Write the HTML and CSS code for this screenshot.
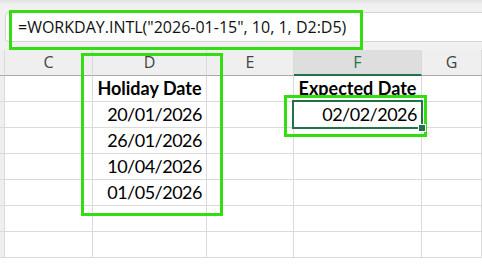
FILE: index.html
```html
<!DOCTYPE html>
<html lang="en">
<head>
    <meta charset="UTF-8">
    <title>WORKDAY.INTL</title>
    <link rel="stylesheet" href="styles.css">
</head>
<body>
    <div class="sheet">
        <div class="toolbar">
            <div class="formula-bar">=WORKDAY.INTL("2026-01-15", 10, 1, D2:D5)</div>
        </div>

        <div class="grid">
            <div class="cell head corner"></div>
            <div class="cell head">C</div>
            <div class="cell head">D</div>
            <div class="cell head">E</div>
            <div class="cell head active">F</div>
            <div class="cell head">G</div>

            <div class="cell corner"></div>
            <div class="cell"></div>
            <div class="cell bold">Holiday Date</div>
            <div class="cell"></div>
            <div class="cell bold">Expected Date</div>
            <div class="cell"></div>

            <div class="cell corner"></div>
            <div class="cell"></div>
            <div class="cell num">20/01/2026</div>
            <div class="cell"></div>
            <div class="cell num selected">02/02/2026<span class="fill-handle"></span></div>
            <div class="cell"></div>

            <div class="cell corner"></div>
            <div class="cell"></div>
            <div class="cell num">26/01/2026</div>
            <div class="cell"></div>
            <div class="cell"></div>
            <div class="cell"></div>

            <div class="cell corner"></div>
            <div class="cell"></div>
            <div class="cell num">10/04/2026</div>
            <div class="cell"></div>
            <div class="cell"></div>
            <div class="cell"></div>

            <div class="cell corner"></div>
            <div class="cell"></div>
            <div class="cell num">01/05/2026</div>
            <div class="cell"></div>
            <div class="cell"></div>
            <div class="cell"></div>

            <div class="cell corner"></div>
            <div class="cell"></div>
            <div class="cell"></div>
            <div class="cell"></div>
            <div class="cell"></div>
            <div class="cell"></div>

            <div class="cell corner"></div>
            <div class="cell"></div>
            <div class="cell"></div>
            <div class="cell"></div>
            <div class="cell"></div>
            <div class="cell"></div>
        </div>

        <!-- highlight boxes drawn over the sheet -->
        <div class="mark mark-formula"></div>
        <div class="mark mark-holidays"></div>
        <div class="mark mark-result"></div>
    </div>
</body>
</html>
```

FILE: styles.css
```css
body {
    margin: 0;
    background-color: #fff;
    font-family: "Open Sans", "Liberation Sans", sans-serif;
}

.sheet {
    position: relative;
    width: 482px;
    height: 272px;
    overflow: hidden;
}

.toolbar {
    height: 50px;
    padding-top: 12px;
    padding-left: 5px;
    box-sizing: border-box;
    background: linear-gradient(#e2e2e2, #f1f1f1 5px, #f1f1f1);
}

.formula-bar {
    height: 30px;
    padding-left: 12px;
    box-sizing: border-box;
    background-color: #fff;
    border: 1px solid #d4d4d4;
    border-right: none;
    border-radius: 4px 0 0 4px;
    font-size: 16px;
    line-height: 28px;
    color: #111;
}

.grid {
    display: grid;
    grid-template-columns: 5px 88px 114px 87px 128px 1fr;
    grid-auto-rows: 26px;
}

.cell {
    border-right: 1px solid #dadada;
    border-bottom: 1px solid #dadada;
    font-family: Lato, "Open Sans", sans-serif;
    font-size: 18px;
    line-height: 25px;
    color: #000;
    white-space: nowrap;
}

.head {
    background-color: #efefef;
    border-bottom-color: #ababab;
    font-family: "Open Sans", sans-serif;
    font-size: 16px;
    color: #444;
    text-align: center;
}

.head.active {
    background-color: #dedede;
    border-bottom: 2px solid #217346;
    line-height: 24px;
    color: #217346;
}

.corner {
    background-color: #efefef;
}

.bold {
    font-weight: bold;
    text-align: center;
}

.num {
    text-align: right;
    padding-right: 4px;
    letter-spacing: -0.5px;
}

.selected {
    position: relative;
}

.selected::after {
    content: "";
    position: absolute;
    left: -2px;
    top: -2px;
    right: -2px;
    bottom: -2px;
    border: 2px solid #217346;
}

.fill-handle {
    position: absolute;
    right: -5px;
    bottom: -5px;
    width: 6px;
    height: 6px;
    background-color: #217346;
    border: 1px solid #fff;
    z-index: 1;
}

.mark {
    position: absolute;
    border: 3px solid #33dd11;
    box-sizing: border-box;
}

.mark-formula {
    left: 9px;
    top: 10px;
    width: 354px;
    height: 40px;
}

.mark-holidays {
    left: 81px;
    top: 53px;
    width: 142px;
    height: 163px;
}

.mark-result {
    left: 284px;
    top: 95px;
    width: 143px;
    height: 42px;
}
```
